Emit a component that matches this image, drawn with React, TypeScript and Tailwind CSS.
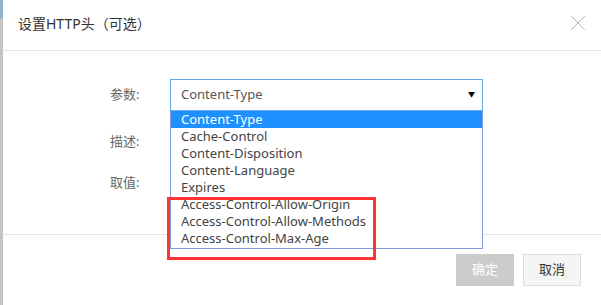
import { X } from "lucide-react";

const options = [
  "Content-Type",
  "Cache-Control",
  "Content-Disposition",
  "Content-Language",
  "Expires",
  "Access-Control-Allow-Origin",
  "Access-Control-Allow-Methods",
  "Access-Control-Max-Age",
];

const font = { fontFamily: '"Noto Sans", "Noto Sans CJK SC", sans-serif' };

export default function App() {
  return (
    <div
      className="relative w-[601px] h-[305px] bg-white flex overflow-hidden text-[13px] text-[#333]"
      style={font}
    >
      {/* 左側の影 */}
      <div className="w-[3px] flex flex-col bg-[#c4c4c4]">
        <div className="h-[18px] bg-[#8fb4cc]" />
      </div>

      <div className="flex-1 flex flex-col">
        {/* ヘッダー */}
        <div className="h-[51px] border-b border-[#e5e5e5] flex items-center justify-between pl-[15px] pr-[10px] pb-[4px]">
          <span className="text-[14px] text-[#333]">设置HTTP头（可选）</span>
          <X className="w-[26px] h-[26px] text-[#b0b0b0]" strokeWidth={0.9} />
        </div>

        {/* フォーム */}
        <div className="h-[184px] border-b border-[#e5e5e5] pt-[28px] pl-[107px]">
          <div className="flex items-center h-[32px]">
            <span className="w-[60px] text-[#666]">参数:</span>
            <div className="relative">
              <div className="w-[313px] h-[32px] border border-[#66a9e8] flex items-center justify-between pl-[10px] pr-[7px] text-[#555]">
                <span>Content-Type</span>
                <span className="text-[7px] text-black">▼</span>
              </div>
              {/* ドロップダウン */}
              <div className="absolute left-0 top-[32px] w-[313px] border border-t-0 border-[#7c9fd9] bg-white flex flex-col pb-[1px]">
                {options.map((o, i) => (
                  <div
                    key={o}
                    className={
                      i === 0
                        ? "h-[17px] leading-[17px] pl-[10px] bg-[#1e90ff] text-white"
                        : "h-[17px] leading-[17px] pl-[10px] text-[#444]"
                    }
                  >
                    {o}
                  </div>
                ))}
              </div>
            </div>
          </div>
          <div className="flex items-center h-[32px] mt-[15px]">
            <span className="w-[60px] text-[#666]">描述:</span>
          </div>
          <div className="flex items-center h-[32px] mt-[9px]">
            <span className="w-[60px] text-[#666]">取值:</span>
          </div>
        </div>

        {/* フッター */}
        <div className="flex justify-end gap-[9px] pt-[19px] pr-[20px]">
          <button className="w-[58px] h-[32px] bg-[#cccccc] text-white">确定</button>
          <button className="w-[58px] h-[32px] bg-[#f5f5f5] border border-[#dddddd] text-[#333]">取消</button>
        </div>
      </div>

      {/* 赤い注釈枠 */}
      <div className="absolute left-[167px] top-[197px] w-[209px] h-[63px] border-[3px] border-[#ff3333] pointer-events-none" />
    </div>
  );
}
